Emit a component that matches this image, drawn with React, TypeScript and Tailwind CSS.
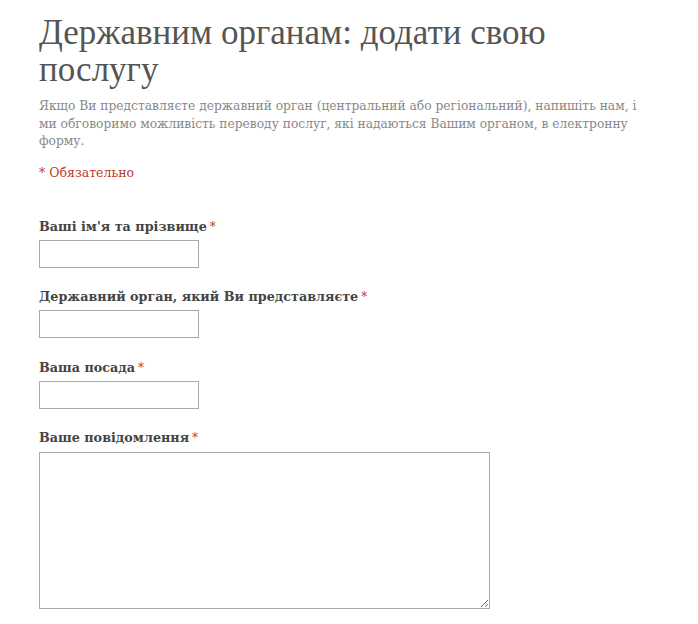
const Req = () => <span className="text-[#c0392b] font-normal text-[12px] ml-[3px] align-top">*</span>

const Field = ({ label }: { label: string }) => (
  <div className="mb-[20.5px]">
    <label className="block text-[12.75px] leading-[18px] font-bold text-[#444]">
      {label}
      <Req />
    </label>
    <input type="text" className="mt-[4px] block w-[160px] h-[28px] border border-[#aaa] bg-white" />
  </div>
)

export default function App() {
  return (
    <div className="min-h-[624px] bg-white px-[39px] pt-[14px] font-['DejaVu_Serif','Liberation_Serif',serif]">
      <h1 className="font-['Liberation_Serif',serif] text-[35px] leading-[37px] text-[#555] w-[580px]">
        Державним органам: додати свою послугу
      </h1>
      <p className="mt-[10px] text-[12.25px] leading-[17.5px] text-[#888] w-[612px]">
        Якщо Ви представляєте державний орган (центральний або регіональний), напишіть нам, і ми обговоримо можливість переводу послуг, які надаються Вашим органом, в електронну форму.
      </p>
      <p className="mt-[13px] text-[12.5px] leading-[17px] text-[#c0392b]">* Обязательно</p>
      <form className="mt-[37px]">
        <Field label="Ваші ім'я та прізвище" />
        <Field label="Державний орган, який Ви представляєте" />
        <Field label="Ваша посада" />
        <div>
          <label className="block text-[12.75px] leading-[18px] font-bold text-[#444]">
            Ваше повідомлення
            <Req />
          </label>
          <textarea className="mt-[5px] block w-[451px] h-[157px] border border-[#aaa] bg-white" />
        </div>
      </form>
    </div>
  )
}
